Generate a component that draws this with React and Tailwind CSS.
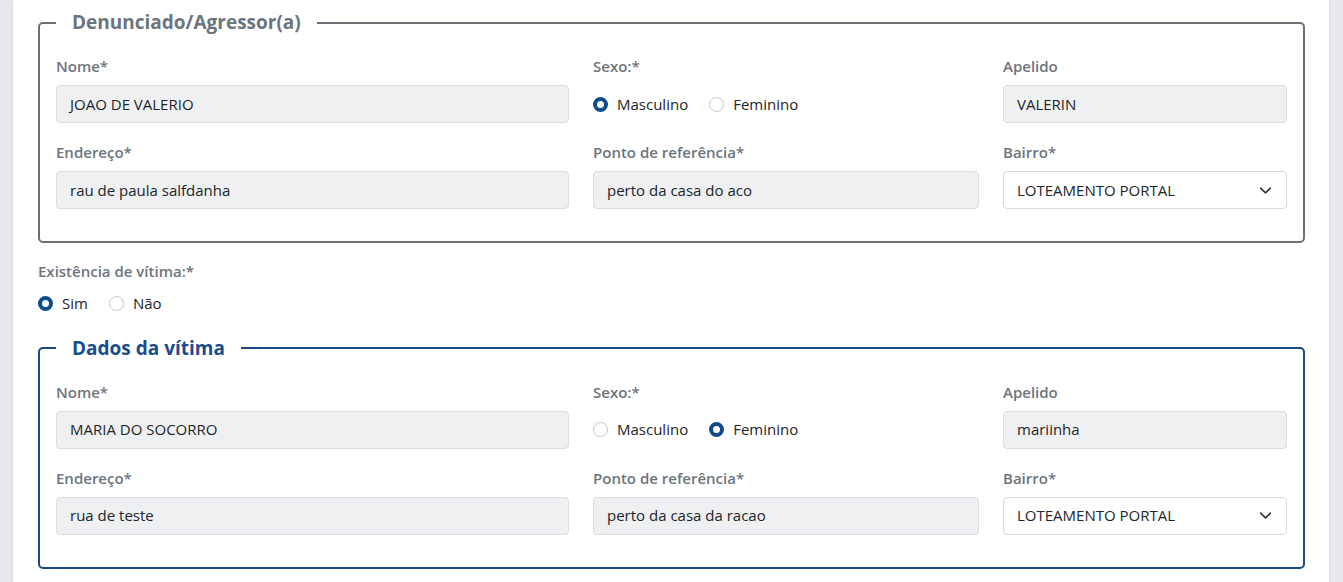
import React from "react";

function Label({ children }) {
  return <label className="block text-[15px] leading-[22px] font-semibold text-[#6c757d] mb-2">{children}</label>;
}

function Input({ value }) {
  return (
    <div className="h-[38px] flex items-center px-[13px] rounded-[4px] border border-[#dadde1] bg-[#eff0f2] text-[15px] text-[#212529]">
      {value}
    </div>
  );
}

function Select({ value }) {
  return (
    <div className="h-[38px] flex items-center justify-between pl-[13px] pr-[14px] rounded-[4px] border border-[#d6d9dd] bg-white text-[15px] text-[#212529]">
      <span>{value}</span>
      <svg width="13" height="13" viewBox="0 0 16 16" fill="none" stroke="#343a40" strokeWidth="2" strokeLinecap="round" strokeLinejoin="round">
        <path d="M2 5l6 6 6-6" />
      </svg>
    </div>
  );
}

function Radio({ checked, label }) {
  return (
    <span className="flex items-center gap-[9px] text-[15px] text-[#212529]">
      {checked ? (
        <span className="w-[15px] h-[15px] rounded-full border-[4.5px] border-[#0f4c8f] bg-white" />
      ) : (
        <span className="w-[15px] h-[15px] rounded-full border border-[#c3c7cb] bg-white" />
      )}
      {label}
    </span>
  );
}

function PersonFieldset({ title, blue, data }) {
  const border = blue ? "border-[#1b4a80]" : "border-[#6c7177]";
  const legend = blue ? "text-[#1a4d8c]" : "text-[#6c757d]";
  return (
    <fieldset className={`border-2 ${border} rounded-[5px] px-4 pb-8`}>
      <legend className={`px-4 text-[19px] leading-[27px] font-bold ${legend}`}>{title}</legend>
      <div className="grid grid-cols-[513px_386px_284px] gap-x-6 gap-y-[18px] pt-[19px]">
        <div>
          <Label>Nome*</Label>
          <Input value={data.nome} />
        </div>
        <div>
          <Label>Sexo:*</Label>
          <div className="h-[38px] flex items-center gap-[21px]">
            <Radio checked={data.sexo === "M"} label="Masculino" />
            <Radio checked={data.sexo === "F"} label="Feminino" />
          </div>
        </div>
        <div>
          <Label>Apelido</Label>
          <Input value={data.apelido} />
        </div>
        <div>
          <Label>Endereço*</Label>
          <Input value={data.endereco} />
        </div>
        <div>
          <Label>Ponto de referência*</Label>
          <Input value={data.ponto} />
        </div>
        <div>
          <Label>Bairro*</Label>
          <Select value={data.bairro} />
        </div>
      </div>
    </fieldset>
  );
}

export default function App() {
  const agressor = {
    nome: "JOAO DE VALERIO",
    sexo: "M",
    apelido: "VALERIN",
    endereco: "rau de paula salfdanha",
    ponto: "perto da casa do aco",
    bairro: "LOTEAMENTO PORTAL",
  };
  const vitima = {
    nome: "MARIA DO SOCORRO",
    sexo: "F",
    apelido: "mariinha",
    endereco: "rua de teste",
    ponto: "perto da casa da racao",
    bairro: "LOTEAMENTO PORTAL",
  };

  return (
    <div className="min-h-screen bg-[#e7e9ec] flex pl-[13px] pr-[14px] font-['Open_Sans',sans-serif]">
      <div className="flex-1 bg-white pl-[25px] pr-[24px] pt-[9px] pb-4 shadow-[0_0_3px_rgba(0,0,0,0.12)]">
        <PersonFieldset title="Denunciado/Agressor(a)" data={agressor} />

        <div className="mt-[17px]">
          <Label>Existência de vítima:*</Label>
          <div className="pt-[2px]">
            <div className="flex items-center gap-[21px]">
              <Radio checked label="Sim" />
              <Radio label="Não" />
            </div>
          </div>
        </div>

        <div className="mt-[20px]">
          <PersonFieldset title="Dados da vítima" blue data={vitima} />
        </div>
      </div>
    </div>
  );
}
